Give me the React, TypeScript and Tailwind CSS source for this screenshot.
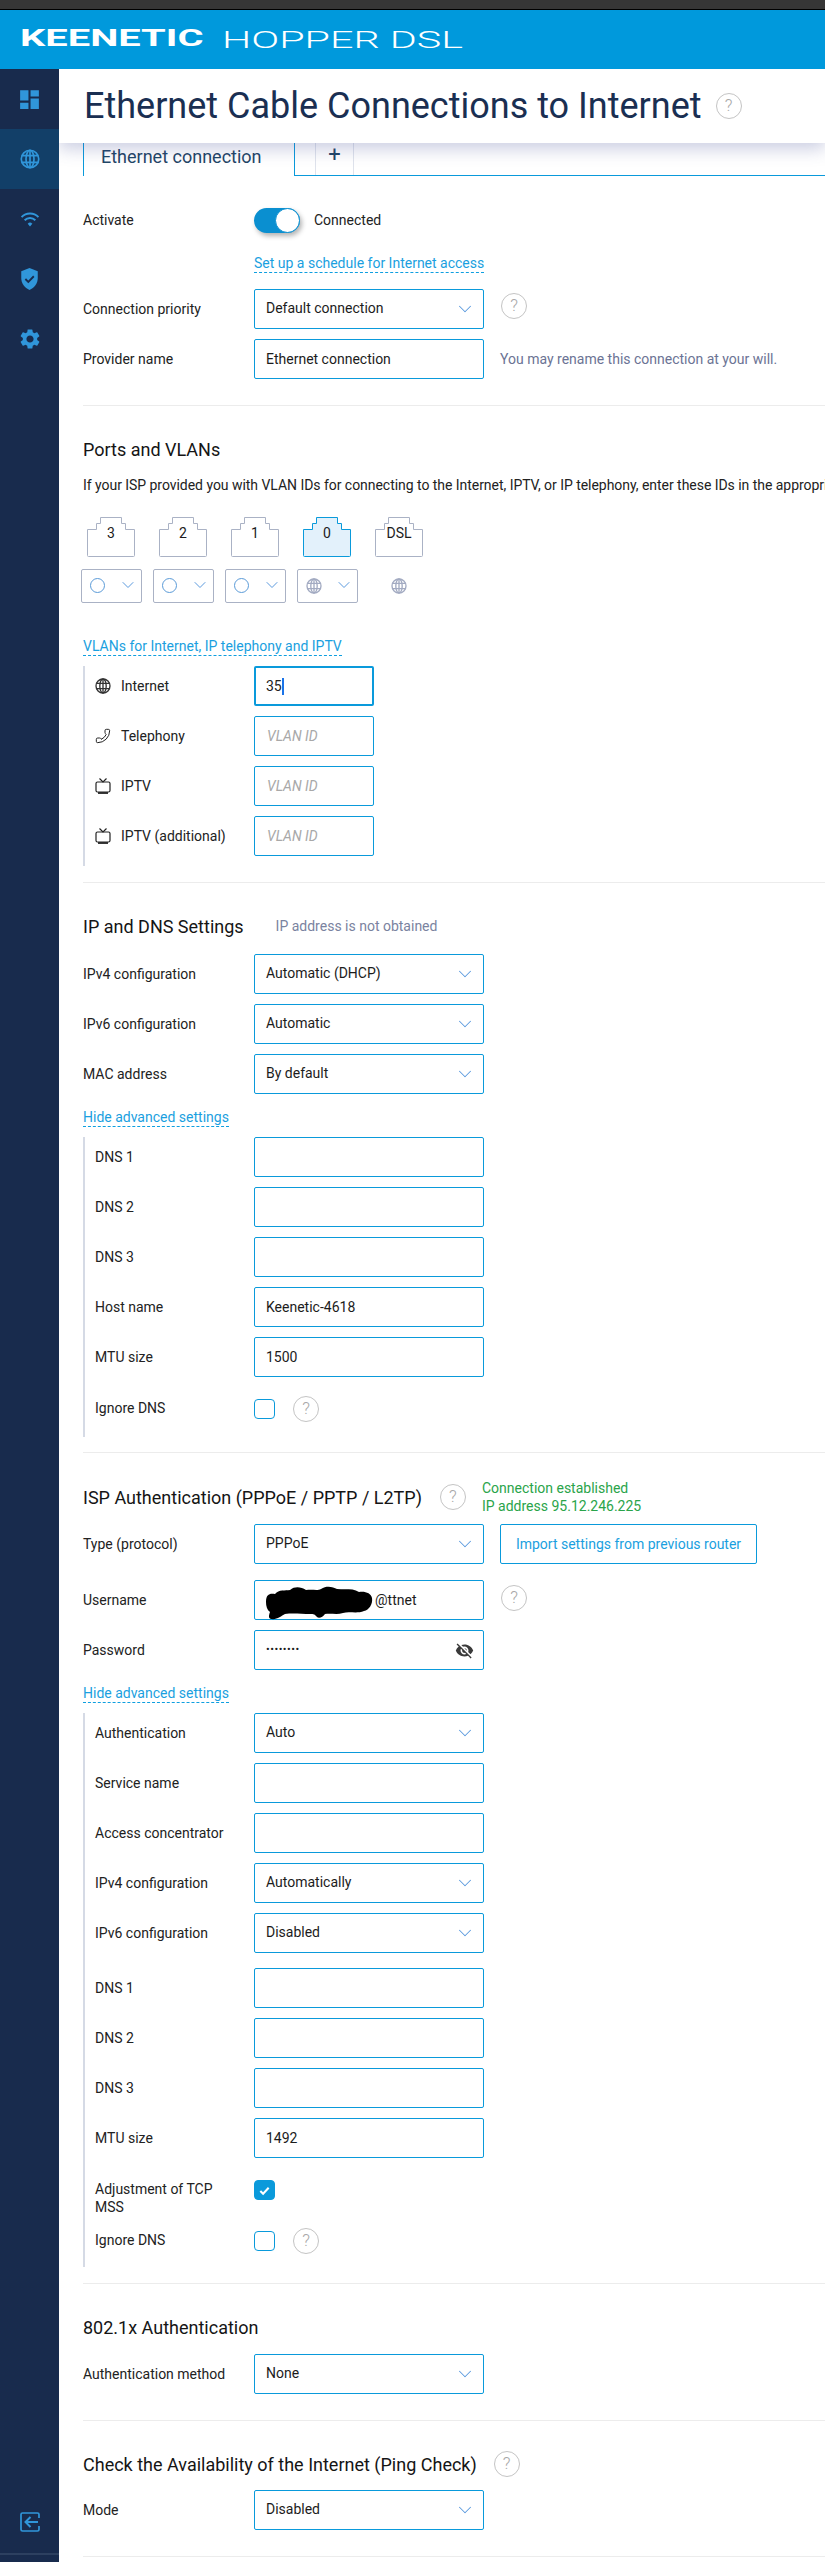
import React from 'react';
import { ChevronDown, Phone } from 'lucide-react';
import { MdDashboard, MdSettings, MdVisibilityOff } from 'react-icons/md';

const Globe = ({ className }: { className?: string }) => (
	<svg viewBox="0 0 24 24" fill="none" stroke="currentColor" strokeWidth="2" className={className}>
		<circle cx="12" cy="12" r="10.5" />
		<ellipse cx="12" cy="12" rx="4.8" ry="10.5" />
		<path d="M2 8h20M2 16h20M12 1.5v21" />
	</svg>
);

const TvIcon = () => (
	<svg viewBox="0 0 16 16" fill="none" stroke="#222222" strokeWidth="1.2" className="h-4 w-4 shrink-0">
		<rect x="1" y="4" width="14" height="10" rx="1.5" />
		<path d="M4.500 0.500L8 4l3.500-3.500" />
		<path d="M3 15h10" strokeWidth="1.800" />
	</svg>
);

const Help = ({ className = '' }: { className?: string }) => (
	<span
		className={`flex h-[26px] w-[26px] shrink-0 items-center justify-center rounded-full border-[1.5px] border-[#c4c4c4] text-[17px] font-light text-[#a8a8a8] ${className}`}
	>
		?
	</span>
);

const Divider = ({ className = '' }: { className?: string }) => (
	<div className={`h-px bg-[#ececec] ${className}`} />
);

const Heading = ({ children, className = '' }: { children: React.ReactNode; className?: string }) => (
	<div className={`flex h-6 items-center text-[18px] text-[#151515] ${className}`}>{children}</div>
);

const DashLink = ({ children, className = '' }: { children: React.ReactNode; className?: string }) => (
	<div className={`flex ${className}`}>
		<span className="h-[18px] border-b border-dashed border-[#0e9fe0] text-[14px] leading-[17px] text-[#1a9fe0]">
			{children}
		</span>
	</div>
);

const Select = ({ value }: { value: string }) => (
	<div className="flex h-10 w-[230px] shrink-0 items-center justify-between rounded-[2px] border-[1.5px] border-[#0a9adb] pl-[11px] pr-[7px] text-[14px] text-[#1c1c1c]">
		<span className="-mt-[2px]">{value}</span>
		<ChevronDown className="h-[22px] w-[22px] text-[#5b9ade]" strokeWidth={1.1} />
	</div>
);

const Input = ({ value = '' }: { value?: string }) => (
	<div className="flex h-10 w-[230px] shrink-0 items-center rounded-[2px] border-[1.5px] border-[#0a9adb] pl-[11px] text-[14px] text-[#1c1c1c]">
		{value}
	</div>
);

const VlanInput = () => (
	<div className="flex h-10 w-[120px] shrink-0 items-center rounded-[2px] border-[1.5px] border-[#0a9adb] pl-[12px] text-[14px] italic text-[#a8a8a8]">
		VLAN ID
	</div>
);

const Row = ({
	label,
	children,
	className = '',
	inner = false,
}: {
	label: string;
	children: React.ReactNode;
	className?: string;
	inner?: boolean;
}) => (
	<div className={`flex h-10 items-center ${className}`}>
		<div className={`shrink-0 text-[14px] text-[#222222] ${inner ? 'w-[159px]' : 'w-[171px]'}`}>{label}</div>
		{children}
	</div>
);

const Group = ({ children, className = '' }: { children: React.ReactNode; className?: string }) => (
	<div className={`border-l-2 border-[#d5dae5] pl-[10px] ${className}`}>{children}</div>
);

const Checkbox = ({ checked = false }: { checked?: boolean }) => (
	<span
		className={`flex h-[20px] w-[21px] shrink-0 items-center justify-center rounded-[4px] border-[1.5px] border-[#0a9adb] ${
			checked ? 'bg-[#0a9adb]' : 'bg-white'
		}`}
	>
		{checked && (
			<svg viewBox="0 0 14 14" className="h-[13px] w-[13px]" fill="none" stroke="white" strokeWidth="2.2">
				<path d="M2.5 7.5l3 3 6-6.5" />
			</svg>
		)}
	</span>
);

const ports = [
	{ name: '3', active: false },
	{ name: '2', active: false },
	{ name: '1', active: false },
	{ name: '0', active: true },
	{ name: 'DSL', active: false },
];

const Port = ({ name, active }: { name: string; active: boolean }) => (
	<div className="relative h-10 w-12 shrink-0">
		<svg viewBox="0 0 48 40" className="h-10 w-12" fill={active ? '#e3f1fb' : 'none'}>
			<path
				d="M0.500 12.500h9v-6h4v-6h21v6h4v6h9v26a1 1 0 0 1-1 1h-45a1 1 0 0 1-1-1z"
				stroke={active ? '#0a9adb' : '#aab2c5'}
				strokeWidth="1"
			/>
		</svg>
		<span className="absolute inset-x-0 top-[6px] text-center text-[14px] leading-5 text-[#1c1c1c]">{name}</span>
	</div>
);

const PortSelect = ({ globe = false }: { globe?: boolean }) => (
	<div className="flex h-[34px] w-[61px] shrink-0 items-center justify-between rounded-[2px] border border-[#aab2c5] pl-2 pr-[3px]">
		{globe ? (
			<Globe className="h-4 w-4 text-[#a3abc2]" />
		) : (
			<span className="-mt-[1px] h-[15px] w-[15px] rounded-full border border-[#5b9bd8]" />
		)}
		<ChevronDown className="-mt-[2px] h-[20px] w-[20px] text-[#5b9ade]" strokeWidth={1.2} />
	</div>
);

const NavItem = ({ children, active = false }: { children: React.ReactNode; active?: boolean }) => (
	<div className={`flex h-[60px] items-center justify-center ${active ? 'bg-[#123f68]' : ''}`}>{children}</div>
);

export default function App() {
	return (
		<div className="flex h-[2562px] w-[825px] flex-col overflow-hidden bg-white font-['Roboto',sans-serif]">
			<div className="h-[10px] shrink-0 border-b border-black bg-[#363636]" />
			<header className="flex h-[59px] shrink-0 items-center bg-[#0099dc] pl-[20px] text-white">
				<span className="w-[202px] shrink-0">
					<span className="inline-block origin-left scale-x-[1.66] text-[24px] font-bold leading-none">KEENETIC</span>
				</span>
				<span className="inline-block origin-left scale-x-[1.72] whitespace-nowrap text-[24px] font-light leading-none">
					HOPPER DSL
				</span>
			</header>
			<div className="flex min-h-0 flex-1">
				<aside className="relative z-20 flex w-[59px] shrink-0 flex-col bg-[#182b4d] text-[#3096da]">
					<NavItem>
						<MdDashboard className="h-[25px] w-[25px]" />
					</NavItem>
					<NavItem active>
						<Globe className="h-5 w-5" />
					</NavItem>
					<NavItem>
						<svg viewBox="0 0 20 16" className="h-[15px] w-[20px]" fill="none" stroke="currentColor" strokeWidth="2.1">
							<path d="M1 5.500a12.500 12.500 0 0 1 18 0M4.300 8.800a8 8 0 0 1 11.400 0" />
							<path d="M10 15.500l-2.500-3a3.500 3.500 0 0 1 5 0z" fill="currentColor" stroke="none" />
						</svg>
					</NavItem>
					<NavItem>
						<svg viewBox="0 0 20 24" className="h-[22px] w-[19px]">
							<path d="M10 0L1 3.500v7.500c0 6 3.800 10.800 9 13 5.200-2.200 9-7 9-13V3.500z" fill="currentColor" />
							<path d="M5.500 12l3.200 3.200 6-6.200" fill="none" stroke="#182b4d" strokeWidth="2" />
						</svg>
					</NavItem>
					<NavItem>
						<MdSettings className="h-6 w-6" />
					</NavItem>
					<div className="mt-auto flex justify-center pb-[21px]">
						<svg viewBox="0 0 20 20" className="h-5 w-5" fill="none" stroke="currentColor" strokeWidth="1.700">
							<path d="M19 6V2.500A1.500 1.500 0 0 0 17.500 1h-15A1.500 1.500 0 0 0 1 2.500v15A1.500 1.500 0 0 0 2.500 19h15a1.500 1.500 0 0 0 1.500-1.500V14" />
							<path d="M18 10H6M10.500 5L5.500 10l5 5" strokeWidth="2" />
						</svg>
					</div>
					<div className="mb-[7px] h-[2px] bg-[#2d4060]" />
				</aside>
				<main className="min-w-0 flex-1 overflow-hidden">
					<div className="relative z-10 flex h-[74px] items-center bg-white pl-[25px] shadow-[0_6px_16px_rgba(70,80,150,0.28)]">
						<h1 className="whitespace-nowrap text-[36px] font-normal leading-none text-[#1a2f52]">
							Ethernet Cable Connections to Internet
						</h1>
						<Help className="ml-[14px]" />
					</div>
					<div className="ml-[24px] flex h-[33px] border-b border-[#0a9adb]">
						<div className="-mb-px h-[33px] w-[212px] border-x border-[#0a9adb] bg-white pl-[17px] pt-[2px] text-[18px] leading-6 text-[#1f4566]">
							Ethernet connection
						</div>
						<div className="ml-[20px] flex h-[32px] w-[39px] justify-center border-x border-[#dfe3ec] text-[22px] leading-6 text-[#1f4566]">
							+
						</div>
					</div>
					<div className="pl-[24px]">
						<div className="mt-[32px] flex h-[25px] items-center text-[14px] text-[#222222]">
							<div className="w-[171px]">Activate</div>
							<span className="flex h-[25px] w-[46px] justify-end rounded-full bg-[#0a8fd0] shadow-[2px_3px_5px_rgba(0,0,0,0.3)]">
								<span className="h-[25px] w-[25px] rounded-full border border-[#0a8fd0] bg-white" />
							</span>
							<span className="ml-[14px]">Connected</span>
						</div>
						<DashLink className="ml-[171px] mt-[22px]">Set up a schedule for Internet access</DashLink>
						<Row label="Connection priority" className="mt-[16px]">
							<Select value="Default connection" />
							<Help className="-mt-[6px] ml-[17px]" />
						</Row>
						<Row label="Provider name" className="mt-[10px]">
							<Input value="Ethernet connection" />
							<span className="ml-[16px] whitespace-nowrap text-[14px] text-[#6b7394]">
								You may rename this connection at your will.
							</span>
						</Row>
						<Divider className="mt-[26px]" />

						<Heading className="mt-[31px]">Ports and VLANs</Heading>
						<p className="mt-[14px] whitespace-nowrap text-[14px] leading-5 tracking-[-0.04px] text-[#222222]">
							If your ISP provided you with VLAN IDs for connecting to the Internet, IPTV, or IP telephony, enter these
							IDs in the appropriate fields
						</p>
						<div className="ml-[4px] mt-[22px] flex gap-[24px]">
							{ports.map((p) => (
								<Port key={p.name} name={p.name} active={p.active} />
							))}
						</div>
						<div className="-ml-[2px] mt-[12px] flex items-center gap-[11px]">
							<PortSelect />
							<PortSelect />
							<PortSelect />
							<PortSelect globe />
							<Globe className="ml-[22px] h-4 w-4 text-[#a3abc2]" />
						</div>
						<DashLink className="mt-[35px]">VLANs for Internet, IP telephony and IPTV</DashLink>
						<Group className="mt-[10px] flex flex-col gap-[10px] pb-[10px]">
							<div className="flex h-10 items-center text-[14px] text-[#222222]">
								<Globe className="h-4 w-4 shrink-0 text-[#333333]" />
								<span className="ml-[10px] w-[133px]">Internet</span>
								<div className="flex h-10 w-[120px] items-center rounded-[2px] border-[2.5px] border-[#0a9adb] pl-[10px]">
									35<span className="h-[17px] w-[2px] bg-[#1a73e8]" />
								</div>
							</div>
							<div className="flex h-10 items-center text-[14px] text-[#222222]">
								<Phone className="h-4 w-4 shrink-0 -scale-x-100 text-[#222222]" strokeWidth={1.5} />
								<span className="ml-[10px] w-[133px]">Telephony</span>
								<VlanInput />
							</div>
							<div className="flex h-10 items-center text-[14px] text-[#222222]">
								<TvIcon />
								<span className="ml-[10px] w-[133px]">IPTV</span>
								<VlanInput />
							</div>
							<div className="flex h-10 items-center text-[14px] text-[#222222]">
								<TvIcon />
								<span className="ml-[10px] w-[133px]">IPTV (additional)</span>
								<VlanInput />
							</div>
						</Group>
						<Divider className="mt-[16px]" />

						<Heading className="mt-[31px]">
							IP and DNS Settings
							<span className="ml-[32px] text-[14px] text-[#7a83a0]">IP address is not obtained</span>
						</Heading>
						<div className="mt-[16px] flex flex-col gap-[10px]">
							<Row label="IPv4 configuration">
								<Select value="Automatic (DHCP)" />
							</Row>
							<Row label="IPv6 configuration">
								<Select value="Automatic" />
							</Row>
							<Row label="MAC address">
								<Select value="By default" />
							</Row>
						</div>
						<DashLink className="mt-[15px]">Hide advanced settings</DashLink>
						<Group className="mt-[10px] pb-[18px]">
							<div className="flex flex-col gap-[10px]">
								<Row inner label="DNS 1"><Input /></Row>
								<Row inner label="DNS 2"><Input /></Row>
								<Row inner label="DNS 3"><Input /></Row>
								<Row inner label="Host name"><Input value="Keenetic-4618" /></Row>
								<Row inner label="MTU size"><Input value="1500" /></Row>
							</div>
							<div className="mt-[21px] flex h-[21px] items-center">
								<div className="w-[159px] text-[14px] text-[#222222]">Ignore DNS</div>
								<Checkbox />
								<Help className="ml-[18px]" />
							</div>
						</Group>
						<Divider className="mt-[15px]" />

						<Heading className="mt-[32px]">
							ISP Authentication (PPPoE / PPTP / L2TP)
							<Help className="ml-[18px]" />
							<div className="ml-[16px] text-[14px] leading-[18px] text-[#2aa44a]">
								<div>Connection established</div>
								<div>IP address 95.12.246.225</div>
							</div>
						</Heading>
						<Row label="Type (protocol)" className="mt-[15px]">
							<Select value="PPPoE" />
							<div className="ml-[16px] flex h-10 w-[257px] items-center justify-center rounded-[2px] border-[1.5px] border-[#0a9adb] text-[14px] text-[#1a9fe0]">
								Import settings from previous router
							</div>
						</Row>
						<Row label="Username" className="mt-[16px]">
							<div className="relative flex h-10 w-[230px] items-center rounded-[2px] border-[1.5px] border-[#0a9adb] pl-[120px] text-[14px] text-[#1c1c1c]">
								@ttnet
								<svg viewBox="0 0 110 36" className="absolute left-[10px] top-[3px] h-[36px] w-[110px]" fill="#000000">
									<path d="M1 18C1 10 5 9 10 10 14 5 20 7 25 6 30 2 36 3 41 6 48 5 52 7 56 5 62 1 68 3 72 5 80 6 88 4 94 8 100 7 106 9 107 14 108 20 104 26 99 27 92 30 84 27 78 29 72 31 66 29 60 30 58 33 54 35 52 33 50 31 50 30 46 30 36 30 28 29 20 30 16 32 12 36 6 35 3 34 4 31 5 28 2 26 1 22 1 18Z" />
								</svg>
							</div>
							<Help className="-mt-[4px] ml-[17px]" />
						</Row>
						<Row label="Password" className="mt-[10px]">
							<div className="flex h-10 w-[230px] items-center justify-between rounded-[2px] border-[1.5px] border-[#0a9adb] pl-[11px] pr-[9px] text-[#1c1c1c]">
								<span className="text-[11px] tracking-[0.5px]">••••••••</span>
								<MdVisibilityOff className="h-[19px] w-[19px] text-[#3a3a3a]" />
							</div>
						</Row>
						<DashLink className="mt-[15px]">Hide advanced settings</DashLink>
						<Group className="mt-[10px] pb-[16px]">
							<div className="flex flex-col gap-[10px]">
								<Row inner label="Authentication"><Select value="Auto" /></Row>
								<Row inner label="Service name"><Input /></Row>
								<Row inner label="Access concentrator"><Input /></Row>
								<Row inner label="IPv4 configuration"><Select value="Automatically" /></Row>
								<Row inner label="IPv6 configuration"><Select value="Disabled" /></Row>
							</div>
							<div className="mt-[15px] flex flex-col gap-[10px]">
								<Row inner label="DNS 1"><Input /></Row>
								<Row inner label="DNS 2"><Input /></Row>
								<Row inner label="DNS 3"><Input /></Row>
								<Row inner label="MTU size"><Input value="1492" /></Row>
							</div>
							<div className="mt-[22px] flex h-[38px] items-start">
								<div className="w-[159px] pr-[20px] text-[14px] leading-[18px] text-[#222222]">Adjustment of TCP MSS</div>
								<Checkbox checked />
							</div>
							<div className="mt-[12px] flex h-[21px] items-center">
								<div className="w-[159px] text-[14px] text-[#222222]">Ignore DNS</div>
								<Checkbox />
								<Help className="ml-[18px]" />
							</div>
						</Group>
						<Divider className="mt-[16px]" />

						<Heading className="mt-[31px]">802.1x Authentication</Heading>
						<Row label="Authentication method" className="mt-[15px]">
							<Select value="None" />
						</Row>
						<Divider className="mt-[26px]" />

						<Heading className="mt-[31px]">
							Check the Availability of the Internet (Ping Check)
							<Help className="ml-[17px]" />
						</Heading>
						<Row label="Mode" className="mt-[14px]">
							<Select value="Disabled" />
						</Row>
						<Divider className="mt-[26px]" />
					</div>
				</main>
			</div>
		</div>
	);
}
